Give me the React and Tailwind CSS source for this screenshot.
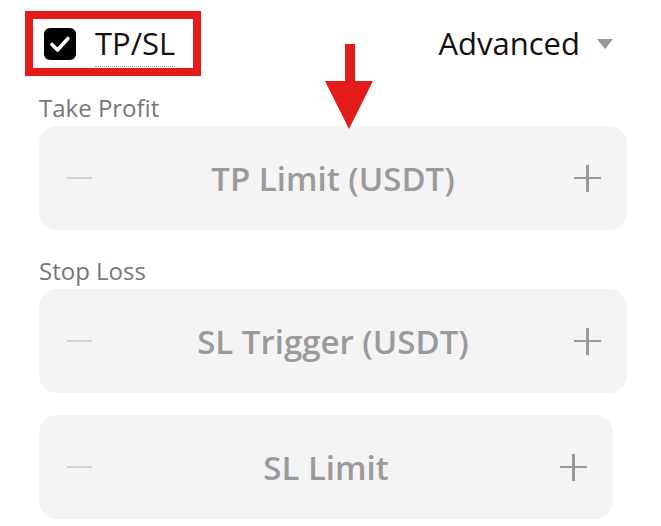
import React from 'react';

const Stepper = ({ label, wide = true }) => (
  <div
    className={`flex items-center justify-between h-[104px] rounded-[18px] bg-[#f4f4f4] pl-[28px] pr-[26px] ${wide ? 'w-[588px]' : 'w-[574px]'}`}
  >
    {/* minus */}
    <span className="block w-[25px] h-[2px] bg-[#d2d2d2]" />
    <span className="flex-1 text-center text-[33px] font-semibold text-[#9a9a9a] leading-none">{label}</span>
    {/* plus */}
    <span className="relative block w-[27px] h-[27px]">
      <span className="absolute left-0 top-[12px] w-[27px] h-[2.5px] bg-[#999999]" />
      <span className="absolute top-0 left-[12px] h-[27px] w-[2.5px] bg-[#999999]" />
    </span>
  </div>
);

const App = () => {
  return (
    <div className="relative w-[661px] h-[526px] bg-white font-['Open_Sans',sans-serif] overflow-hidden">
      {/* header */}
      <div className="flex items-center justify-between pt-[11px] pl-[25px] pr-[48px]">
        <div className="flex w-[176px] h-[65px] border-[8px] border-[#e31b1b] pl-[11px]">
          <div className="self-center w-[32px] h-[32px] rounded-[6px] bg-black">
            <svg width="32" height="32" viewBox="0 0 32 32" fill="none">
              <path d="M8 16.5l5.5 5.5L24 10.5" stroke="white" strokeWidth="3.6" strokeLinecap="round" strokeLinejoin="round" />
            </svg>
          </div>
          <span className="self-end mb-[1px] ml-[19px] text-[31px] leading-[46px] text-[#111111] border-b border-dotted border-[#9a9a9a]">
            TP/SL
          </span>
        </div>
        <div className="flex items-center gap-[17px]">
          <span className="text-[31px] text-[#111111] leading-none">Advanced</span>
          <svg width="16" height="10" viewBox="0 0 16 10">
            <path d="M0 0h16L8 10z" fill="#999999" />
          </svg>
        </div>
      </div>

      {/* form */}
      <div className="pl-[39px]">
        <div className="mt-[17px] mb-[3px] text-[24px] leading-[30px] text-[#777777]">Take Profit</div>
        <Stepper label="TP Limit (USDT)" />
        <div className="mt-[26px] mb-[3px] text-[24px] leading-[30px] text-[#777777]">Stop Loss</div>
        <Stepper label="SL Trigger (USDT)" />
        <div className="mt-[22px]">
          <Stepper label="SL Limit" wide={false} />
        </div>
      </div>

      {/* red annotation arrow */}
      <svg className="absolute left-[325px] top-[44px]" width="48" height="86" viewBox="0 0 48 86">
        <rect x="20" y="0" width="10" height="40" fill="#e31b1b" />
        <path d="M0 37h48L24 85z" fill="#e31b1b" />
      </svg>
    </div>
  );
};

export default App;
